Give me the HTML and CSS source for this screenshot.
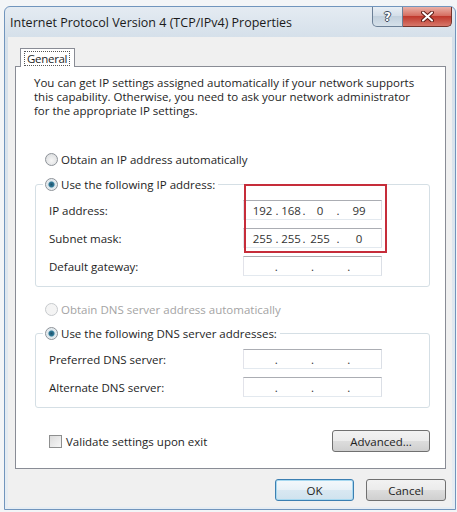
FILE: index.html
```html
<!DOCTYPE html>
<html lang="en">
<head>
    <meta charset="utf-8">
    <title>Internet Protocol Version 4 (TCP/IPv4) Properties</title>
    <link rel="stylesheet" href="styles.css">
</head>

<body>
    <div class="window">
        <div class="titlebar">
            <span class="title">Internet Protocol Version 4 (TCP/IPv4) Properties</span>
            <div class="controls">
                <span class="btn-help">?</span>
                <span class="btn-close">
                    <svg width="13" height="11" viewBox="0 0 13 11">
                        <path d="M2 1.5 L11 9.5 M11 1.5 L2 9.5" stroke="#5e1d16" stroke-width="4" stroke-linecap="round" fill="none"/>
                        <path d="M2 1.5 L11 9.5 M11 1.5 L2 9.5" stroke="#fff" stroke-width="2" stroke-linecap="round" fill="none"/>
                    </svg>
                </span>
            </div>
        </div>

        <div class="client">
            <div class="tabs">
                <span class="tab"><span class="tab-label">General</span></span>
            </div>

            <div class="panel">
                <p class="intro">You can get IP settings assigned automatically if your network supports<br>this capability. Otherwise, you need to ask your network administrator<br>for the appropriate IP settings.</p>

                <div class="option first"><span class="radio"></span>Obtain an IP address automatically</div>
                <fieldset class="group">
                    <legend class="legend"><span class="radio checked"></span>Use the following IP address:</legend>
                    <div class="fields">
                        <div class="marked">
                            <div class="row">
                                <span>IP address:</span>
                                <div class="ip filled"><span>192</span><i>.</i><span>168</span><i>.</i><span>0</span><i>.</i><span>99</span></div>
                            </div>
                            <div class="row">
                                <span>Subnet mask:</span>
                                <div class="ip filled"><span>255</span><i>.</i><span>255</span><i>.</i><span>255</span><i>.</i><span>0</span></div>
                            </div>
                            <span class="highlight"></span>
                        </div>
                        <div class="row">
                            <span>Default gateway:</span>
                            <div class="ip"><span></span><i>.</i><span></span><i>.</i><span></span><i>.</i><span></span></div>
                        </div>
                    </div>
                </fieldset>

                <div class="option second disabled"><span class="radio"></span>Obtain DNS server address automatically</div>
                <fieldset class="group dns">
                    <legend class="legend"><span class="radio checked"></span>Use the following DNS server addresses:</legend>
                    <div class="fields">
                        <div class="row">
                            <span>Preferred DNS server:</span>
                            <div class="ip"><span></span><i>.</i><span></span><i>.</i><span></span><i>.</i><span></span></div>
                        </div>
                        <div class="row">
                            <span>Alternate DNS server:</span>
                            <div class="ip"><span></span><i>.</i><span></span><i>.</i><span></span><i>.</i><span></span></div>
                        </div>
                    </div>
                </fieldset>

                <div class="panel-footer">
                    <div class="check-option"><span class="checkbox"></span>Validate settings upon exit</div>
                    <button class="btn wide">Advanced...</button>
                </div>
            </div>

            <div class="actions">
                <button class="btn default ok">OK</button>
                <button class="btn cancel">Cancel</button>
            </div>
        </div>
    </div>
</body>
</html>
```

FILE: styles.css
```css
* {
    box-sizing: border-box;
}

body {
    margin: 0;
    background-color: #f3f5f7;
    font-family: 'Open Sans', sans-serif;
    font-size: 11.5px;
    color: #1e1e1e;
}

/* window frame */
.window {
    height: 504px;
    margin: 6px 1px 2px 4px;
    padding: 0 3px 2px;
    border: 1px solid #7195bd;
    border-radius: 6px 6px 0 0;
    background: linear-gradient(#e4ebf2, #d5e0ea 30px, #e6edf3);
}

.titlebar {
    display: flex;
    justify-content: space-between;
    align-items: center;
    height: 30px;
}

.title {
    padding-left: 2px;
    font-size: 12.5px;
    color: #1b1b1b;
}

.controls {
    align-self: flex-start;
    display: flex;
}

.btn-help,
.btn-close {
    display: flex;
    justify-content: center;
    align-items: center;
    height: 20px;
    border: 1px solid #6c8097;
    border-top: none;
}

.btn-help {
    width: 31px;
    border-radius: 0 0 0 5px;
    background: linear-gradient(#e9eff5, #d2dde8 50%, #c2d0dd 50%, #d6e1ea);
    color: #fff;
    font-family: 'DejaVu Sans', sans-serif;
    font-weight: bold;
    font-size: 12px;
    text-shadow: 1px 0 0 #3b4b5c, -1px 0 0 #3b4b5c, 0 1px 0 #3b4b5c, 0 -1px 0 #3b4b5c;
}

.btn-close {
    width: 49px;
    border-color: #74342c;
    border-left: none;
    border-radius: 0 0 5px 0;
    background: linear-gradient(#eab0a6, #d4685b 50%, #c0392d 50%, #d7776a);
}

/* client area */
.client {
    height: 470px;
    padding: 11px 6px 0 7px;
    background-color: #f0f0f0;
}

.tabs {
    position: relative;
    z-index: 1;
    display: flex;
    padding-left: 5px;
}

.tab {
    width: 55px;
    height: 19px;
    margin-bottom: -1px;
    padding: 2px 3px 0;
    border: 1px solid #898c95;
    border-bottom: none;
    background-color: #fff;
}

.tab-label {
    display: inline-block;
    padding: 0 2px;
    border: 1px dotted #555;
    line-height: 13px;
    letter-spacing: -0.3px;
}

.panel {
    padding: 9px 15px 16px 18px;
    border: 1px solid #898c95;
    background-color: #fff;
}

.intro {
    margin: 0;
    line-height: 14px;
}

.option,
.legend,
.check-option {
    display: flex;
    align-items: center;
    gap: 3px;
    height: 16px;
}

.option {
    margin-left: 11px;
}

.option.first {
    margin-top: 33px;
}

.option.second {
    margin-top: 14px;
}

.option.disabled {
    color: #a4a4a4;
}

.radio {
    width: 13px;
    height: 13px;
    border: 1px solid #8d9298;
    border-radius: 50%;
    background: radial-gradient(circle at 50% 60%, #f6f6f6, #d7d9db);
}

.radio.checked {
    background: radial-gradient(circle, #1e4f68 0, #2f7a99 2.5px, #d9e4ea 3.5px, #eef2f4 6px);
}

.disabled .radio {
    border-color: #c7cacd;
    background: #f4f4f4;
}

/* group boxes */
.group {
    position: relative;
    min-width: 0;
    margin: 9px 0 0 1px;
    padding: 0 12px 10px 13px;
    border: 1px solid #d5dfe5;
    border-radius: 3px;
}

.group.dns {
    margin-top: 8px;
}

.legend {
    margin-left: -6px;
    padding: 0 3px 0 2px;
}

.fields,
.marked {
    display: flex;
    flex-direction: column;
    gap: 8px;
}

.fields {
    margin-top: 8px;
}

.marked {
    position: relative;
}

.row {
    display: grid;
    grid-template-columns: 194px 139px;
    align-items: center;
    height: 20px;
}

.ip {
    display: grid;
    grid-template-columns: 1fr 8px 1fr 8px 1fr 8px 1fr;
    align-items: center;
    height: 20px;
    border: 1px solid;
    border-color: #abadb3 #dbdfe6 #e3e9ef #e2e3ea;
    color: #333;
}

.ip span,
.ip i {
    display: flex;
    justify-content: center;
    white-space: nowrap;
    font-style: normal;
}

.ip.filled {
    grid-template-columns: 21px 8px 20px 6px 26px 10px 32px;
    padding-left: 8px;
}

.highlight {
    position: absolute;
    top: -16px;
    bottom: -5px;
    left: 195px;
    width: 143px;
    border: 2px solid #c62d3a;
}

/* bottom of the tab page */
.panel-footer {
    display: flex;
    justify-content: space-between;
    align-items: center;
    margin: 22px 0 0 1px;
    padding-left: 14px;
}

.check-option {
    gap: 4px;
}

.checkbox {
    width: 13px;
    height: 13px;
    border: 1px solid #8e8f8f;
    background: linear-gradient(135deg, #dcdcdc, #f6f6f6);
}

.btn {
    height: 22px;
    padding: 0;
    border: 1px solid #707070;
    border-radius: 3px;
    background: linear-gradient(#f2f2f2, #ebebeb 50%, #dddddd 50%, #cfcfcf);
    font: inherit;
    color: #1e1e1e;
}

.btn.wide {
    width: 98px;
}

.actions {
    display: flex;
    justify-content: flex-end;
    gap: 12px;
    margin-top: 10px;
}

.btn.ok {
    width: 79px;
}

.btn.cancel {
    width: 80px;
}

.btn.default {
    border-color: #3c7fb1;
    box-shadow: inset 0 0 0 1px #a6d8f0;
    background: linear-gradient(#f4f8fb, #e8f1f7 50%, #d9e8f2 50%, #cfe2ee);
}
```
